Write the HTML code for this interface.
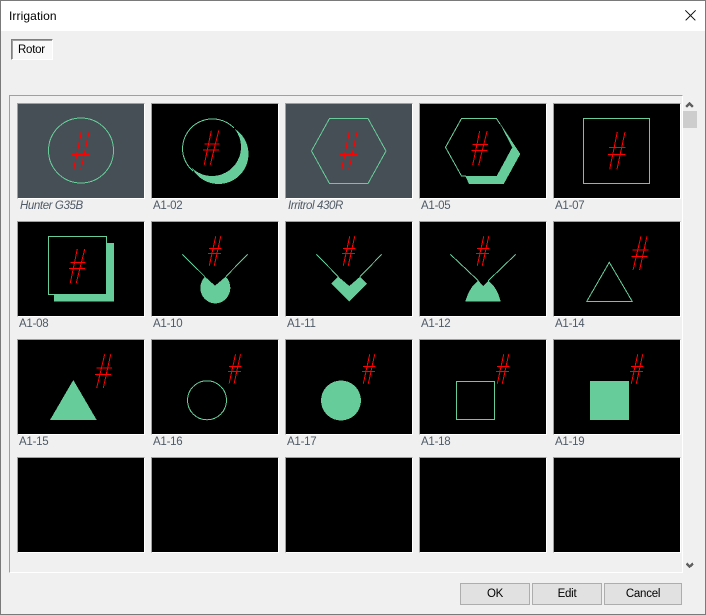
<!DOCTYPE html>
<html><head><meta charset="utf-8"><style>
html,body{margin:0;padding:0;background:#f0f0f0}
body{position:relative;width:706px;height:615px;overflow:hidden;font-family:"Liberation Sans",sans-serif}
div{position:absolute;box-sizing:border-box}
.c{width:128px;height:96px;background:#000;border:1px solid;border-color:#a0a0a0 #fff #fff #a0a0a0}
.s{background:#454f55}
.l{font-size:11.5px;letter-spacing:-.25px;line-height:13px;color:#4f5a66;white-space:nowrap}
.i{font-style:italic;letter-spacing:-.4px}
.b{top:583px;height:22px;background:#e1e1e1;border:1px solid #adadad;font-size:11.5px;letter-spacing:-.25px;line-height:20px;text-align:center;color:#000}
svg{position:absolute;left:0;top:0;shape-rendering:crispEdges}
</style></head><body>
<div style="left:0;top:0;width:706px;height:31px;background:#fff"></div>
<div style="left:9px;top:9px;font-size:12px;line-height:14px;letter-spacing:.1px;color:#000">Irrigation</div>
<div style="left:11px;top:39px;width:42px;height:21px;background:#f8f8f8;border:1px solid;border-color:#808080 #fff #fff #808080;box-shadow:inset 1px 1px 0 #a0a0a0;font-size:11.5px;letter-spacing:-.25px;line-height:20px;padding-left:6px;color:#000">Rotor</div>
<div style="left:9px;top:95px;width:674px;height:478px;border:1px solid;border-color:#a0a0a0 #fff #fff #a0a0a0"></div>

<div class="c s" style="left:17px;top:103px"></div><div class="c" style="left:151px;top:103px"></div><div class="c s" style="left:285px;top:103px"></div><div class="c" style="left:419px;top:103px"></div><div class="c" style="left:553px;top:103px"></div>
<div class="c" style="left:17px;top:221px"></div><div class="c" style="left:151px;top:221px"></div><div class="c" style="left:285px;top:221px"></div><div class="c" style="left:419px;top:221px"></div><div class="c" style="left:553px;top:221px"></div>
<div class="c" style="left:17px;top:339px"></div><div class="c" style="left:151px;top:339px"></div><div class="c" style="left:285px;top:339px"></div><div class="c" style="left:419px;top:339px"></div><div class="c" style="left:553px;top:339px"></div>
<div class="c" style="left:17px;top:457px"></div><div class="c" style="left:151px;top:457px"></div><div class="c" style="left:285px;top:457px"></div><div class="c" style="left:419px;top:457px"></div><div class="c" style="left:553px;top:457px"></div>

<div class="l i" style="left:20px;top:200px">Hunter G35B</div><div class="l" style="left:153px;top:200px">A1-02</div><div class="l i" style="left:288px;top:200px">Irritrol 430R</div><div class="l" style="left:421px;top:200px">A1-05</div><div class="l" style="left:555px;top:200px">A1-07</div>
<div class="l" style="left:19px;top:318px">A1-08</div><div class="l" style="left:153px;top:318px">A1-10</div><div class="l" style="left:287px;top:318px">A1-11</div><div class="l" style="left:421px;top:318px">A1-12</div><div class="l" style="left:555px;top:318px">A1-14</div>
<div class="l" style="left:19px;top:436px">A1-15</div><div class="l" style="left:153px;top:436px">A1-16</div><div class="l" style="left:287px;top:436px">A1-17</div><div class="l" style="left:421px;top:436px">A1-18</div><div class="l" style="left:555px;top:436px">A1-19</div>

<svg width="706" height="615" viewBox="0 0 706 615">
<defs>
<g id="L" fill="none" stroke="#f00"><path d="M0 0L-7.6 37.3M7.7 0L-.3 37.3"/><path d="M-8.3 15.5H8.4M-9.3 22.5H8"/></g>
<g id="M" fill="none" stroke="#f00"><path d="M0 0L-7 34M7.4 0L-1 34"/><path d="M-7 13.5H8.4M-8.3 19.5H7.7"/></g>
<g id="S" fill="none" stroke="#f00"><path d="M0 0L-6.4 29.4M5 0L-1.4 29.4"/><path d="M-6.7 12H6M-7.7 17H5.3"/></g>
<g id="T" fill="none" stroke="#f00"><path d="M0 0L-8 33.7M6 0L-1.4 33.7"/><path d="M-8.3 13.5H7.3M-9.7 20H6.3"/></g>
</defs>
<g fill="none" stroke="#6c9" stroke-width="1">
<circle cx="81" cy="150.5" r="32.5"/>
<circle cx="218.5" cy="154" r="30" fill="#6c9" stroke="none"/>
<circle cx="212" cy="147" r="29" fill="#000" stroke="none"/>
<path d="M234 128A30 30 0 0 0 182.5 148.5A30 30 0 0 0 193 171"/>
<path d="M329.5 118.5H368L386 151L368 183.5H329.5L311.5 151Z"/>
<path d="M498 120L501 124.7L520.3 154L503.7 184H469L465.3 176H496.7L512.3 147.3Z" fill="#6c9" stroke="none"/>
<path d="M500 124L496.5 118.5H461.5L445.5 147.3L461.5 176H466"/>
<rect x="583.5" y="118.5" width="66" height="65"/>
<rect x="54" y="243" width="60" height="58.7" fill="#6c9" stroke="none"/>
<rect x="48.5" y="236.5" width="58" height="58" fill="#000"/>
<path d="M182.3 254.3L205 276.7M247.7 254.3L225.7 276.7"/>
<path d="M205 276.7L215 285.7L225.7 276.7A15 15.5 0 1 1 205 276.7Z" fill="#6c9" stroke="none"/>
<path d="M316.3 254.3L338.3 276.7M381.7 254.3L360 276.7"/>
<path d="M338.3 276.7L349.3 286L360 276.7L367 283.7L349.3 301.7L331.3 283.7Z" fill="#6c9" stroke="none"/>
<path d="M450.3 254.3L478.3 280.7M515.7 254.3L488.3 280.7"/>
<path d="M478.3 280.7L483.3 286L488.3 280.7Q497 287 500.7 301.7H465.3Q469.5 287 478.3 280.7Z" fill="#6c9" stroke="none"/>
<path d="M609.3 262.3L632.3 301.5H586.7Z"/>
<path d="M73.3 380L96.7 420H50Z" fill="#6c9" stroke="none"/>
<circle cx="207" cy="400.3" r="19.5"/>
<circle cx="341" cy="400.5" r="20" fill="#6c9" stroke="none"/>
<rect x="456.5" y="381.5" width="38" height="38"/>
<rect x="590" y="381" width="39" height="39" fill="#6c9" stroke="none"/>
</g>
<use href="#L" x="81.3" y="132"/><use href="#M" x="211.3" y="130.7"/><use href="#L" x="349.3" y="132"/><use href="#M" x="479.7" y="131"/><use href="#L" x="617.3" y="132"/>
<use href="#M" x="77.3" y="249"/><use href="#S" x="215.7" y="236.3"/><use href="#S" x="349.7" y="236.3"/><use href="#S" x="483.7" y="236.3"/><use href="#T" x="641" y="236.3"/>
<use href="#T" x="104.7" y="354.3"/><use href="#S" x="235.5" y="354.3"/><use href="#S" x="369.7" y="354.3"/><use href="#S" x="503.7" y="354.3"/><use href="#S" x="637.7" y="354.3"/>
<path d="M685.5 10.5L695.5 20.5M695.5 10.5L685.5 20.5" fill="none" stroke="#222" stroke-width="1"/>
<path d="M686 107L689.5 103.5L693 107" fill="none" stroke="#606060" stroke-width="2.5"/>
<path d="M686.5 563.5L689.7 566.5L693 563.5" fill="none" stroke="#606060" stroke-width="2.5"/>
</svg>
<div style="left:683px;top:111px;width:14px;height:17px;background:#cdcdcd"></div>
<div class="b" style="left:460px;width:70px">OK</div>
<div class="b" style="left:532px;width:70px">Edit</div>
<div class="b" style="left:604px;width:78px">Cancel</div>
<div style="left:0;top:0;width:706px;height:615px;border:1px solid #7a7a7a"></div>
</body></html>
